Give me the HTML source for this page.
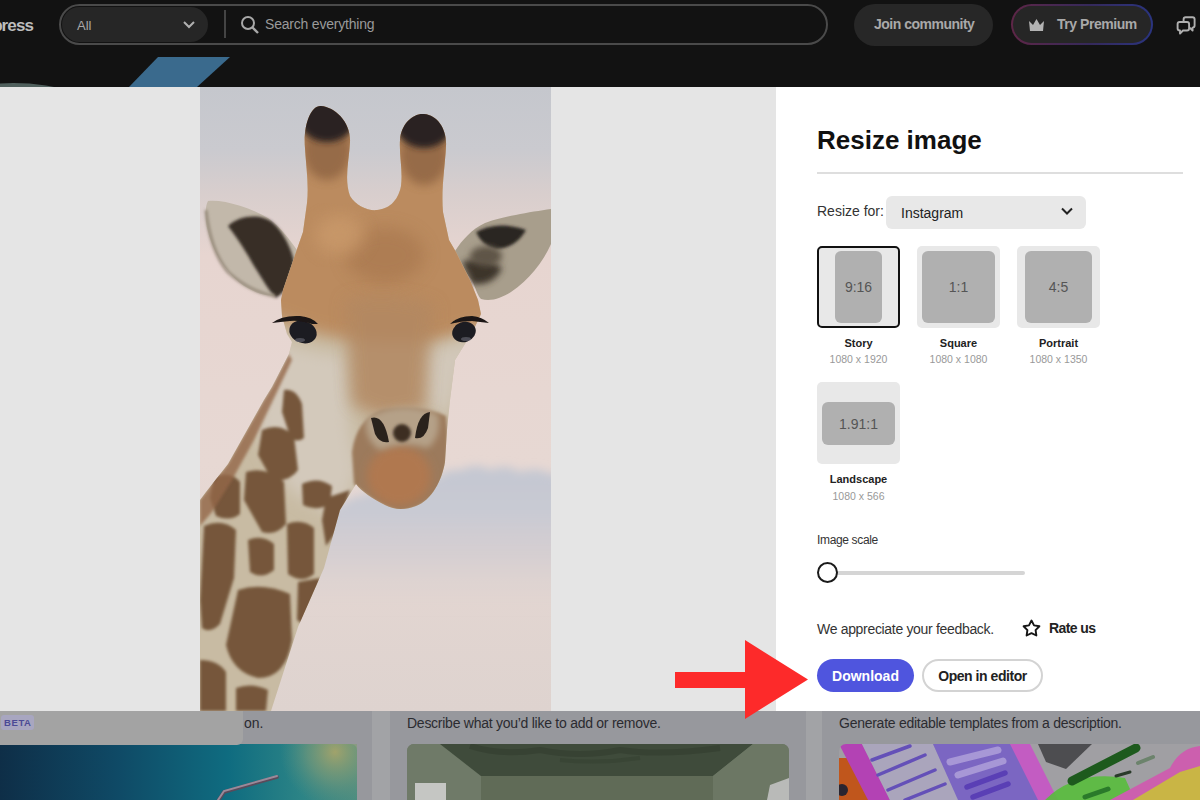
<!DOCTYPE html>
<html><head><meta charset="utf-8">
<style>
*{margin:0;padding:0;box-sizing:border-box}
html,body{width:1200px;height:800px;overflow:hidden;background:#121212;font-family:"Liberation Sans",sans-serif}
.a{position:absolute;white-space:nowrap}
</style></head>
<body>
<!-- HEADER -->
<div class="a" style="left:0;top:0;width:1200px;height:87px;background:#121212"></div>
<div class="a" style="right:1167px;top:16px;font-size:17px;letter-spacing:-0.9px;font-weight:bold;color:#bdbdbd">press</div>
<div class="a" style="left:59px;top:4px;width:769px;height:41px;border:2px solid #4a4a4a;border-radius:21px"></div>
<div class="a" style="left:62px;top:7px;width:146px;height:35px;background:#262626;border-radius:18px"></div>
<div class="a" style="left:77px;top:18px;font-size:13px;color:#a8a8a8">All</div>
<svg class="a" style="left:182px;top:20px" width="14" height="10" viewBox="0 0 14 10"><path d="M2 2 L7 7 L12 2" stroke="#b0b0b0" stroke-width="2" fill="none"/></svg>
<div class="a" style="left:224px;top:10px;width:2px;height:28px;background:#444"></div>
<svg class="a" style="left:240px;top:15px" width="20" height="19" viewBox="0 0 20 19"><circle cx="8" cy="8" r="6" stroke="#a8a8a8" stroke-width="2" fill="none"/><path d="M12.5 12.5 L18 18" stroke="#a8a8a8" stroke-width="2.4"/></svg>
<div class="a" style="left:265px;top:16px;font-size:14px;letter-spacing:-0.2px;color:#9a9a9a">Search everything</div>

<div class="a" style="left:854px;top:4px;width:139px;height:42px;background:#272727;border-radius:21px"></div>
<div class="a" style="left:874px;top:16px;font-size:14px;letter-spacing:-0.5px;font-weight:bold;color:#a9a9a9">Join community</div>

<div class="a" style="left:1011px;top:4px;width:142px;height:41px;border-radius:21px;background:linear-gradient(90deg,#5e2647,#35295a 55%,#2a3480)"></div>
<div class="a" style="left:1013px;top:6px;width:138px;height:37px;border-radius:19px;background:#262626"></div>
<svg class="a" style="left:1028px;top:18px" width="17" height="15" viewBox="0 0 17 15"><path d="M1 3 L5 7 L8.5 1 L12 7 L16 3 L15 13 L2 13 Z" fill="#b3b3b3"/></svg>
<div class="a" style="left:1057px;top:16px;font-size:14px;letter-spacing:-0.45px;font-weight:bold;color:#a9a9a9">Try Premium</div>
<svg class="a" style="left:1172px;top:12px" width="28" height="26" viewBox="1172 12 28 26"><path d="M1183.6 22 V19.3 Q1183.6 17.2 1185.7 17.2 H1192.5 Q1194.6 17.2 1194.6 19.3 V25.5 Q1194.6 27.6 1192.5 27.6 L1192.6 30.6 L1189.6 27.6" stroke="#b0b0b0" stroke-width="1.9" fill="none" stroke-linejoin="round"/><path d="M1179.6 22 H1187 Q1189.1 22 1189.1 24.1 V28.4 Q1189.1 30.5 1187 30.5 H1183 L1180 33.6 V30.5 Q1177.6 30.5 1177.6 28.4 V24.1 Q1177.6 22 1179.6 22 Z" stroke="#b0b0b0" stroke-width="1.9" fill="#121212" stroke-linejoin="round"/></svg>

<!-- blue parallelogram -->
<svg class="a" style="left:0;top:50px" width="260" height="40" viewBox="0 50 260 40"><path d="M158 57 L230 57 L197 87 L129 87 Z" fill="#3a6a8d"/><path d="M0 83.5 Q22 82 46 85.5 L54 87 L0 87Z" fill="#50605d"/></svg>

<!-- MODAL -->
<div class="a" style="left:0;top:87px;width:776px;height:624px;background:#e5e5e5"></div>
<svg class="a" style="left:200px;top:87px" width="351" height="624" viewBox="200 87 351 624">
<defs>
<linearGradient id="sky" x1="0" y1="87" x2="0" y2="711" gradientUnits="userSpaceOnUse">
<stop offset="0" stop-color="#c5c7cd"/><stop offset="0.1" stop-color="#cacacf"/><stop offset="0.17" stop-color="#d8cecd"/><stop offset="0.27" stop-color="#e7d5d0"/><stop offset="0.6" stop-color="#e7d8d3"/><stop offset="1" stop-color="#ded3cf"/>
</linearGradient>
<filter id="b8" x="-30%" y="-30%" width="160%" height="160%"><feGaussianBlur stdDeviation="8"/></filter>
<filter id="b5" x="-30%" y="-30%" width="160%" height="160%"><feGaussianBlur stdDeviation="5"/></filter>
<filter id="b3" x="-30%" y="-30%" width="160%" height="160%"><feGaussianBlur stdDeviation="3"/></filter>
<filter id="b2" x="-30%" y="-30%" width="160%" height="160%"><feGaussianBlur stdDeviation="1.8"/></filter>
<filter id="b1" x="-20%" y="-20%" width="140%" height="140%"><feGaussianBlur stdDeviation="0.7"/></filter>
<clipPath id="headclip"><path d="M200 500 L206 492 L228 464 L246 432 L264 400 L272 387 L289 354 L292 342 L287 334 L282 316 L281 300 L283 290 L296 252 L303 232 L307 203 C309 185 306 165 305 148 C303 125 311 105 321 106 C335 107 351 122 350 142 C349 160 344 180 350 196 C356 206 368 211 377 210 C388 209 398 202 401 186 C403 170 399 155 400 140 C401 124 413 113 424 114 C438 115 447 130 446 146 C445 166 441 190 443 212 L449 240 L456 252 L470 280 L478 300 L481 314 L473 331 L455 360 L450 400 L447 430 L445 462 C442 480 432 500 416 506 C405 510 395 510 385 505 C372 498 362 492 356 484 L340 510 L324 568 L298 627 L271 711 L200 711 Z"/></clipPath>
</defs>
<rect x="200" y="87" width="351" height="624" fill="url(#sky)"/>
<!-- cloud band -->
<defs><linearGradient id="cl" x1="0" y1="462" x2="0" y2="610" gradientUnits="userSpaceOnUse"><stop offset="0" stop-color="#c3c7d2"/><stop offset="0.35" stop-color="#c9cad3"/><stop offset="0.65" stop-color="#d3cdd1" stop-opacity="0.8"/><stop offset="1" stop-color="#ddd3d0" stop-opacity="0"/></linearGradient></defs>
<path d="M260 525 L340 505 Q352 496 368 494 Q385 486 405 484 Q420 478 436 478 Q448 468 462 470 Q476 462 490 470 Q505 463 520 472 Q536 466 551 474 L570 474 L570 610 L260 610 Z" fill="url(#cl)" filter="url(#b5)"/>
<path d="M200 560 Q240 550 280 560 L270 600 L200 600 Z" fill="#d3d0d6" filter="url(#b8)" opacity="0.5"/>
<!-- ears -->
<g filter="url(#b1)">
<path d="M208 201 C222 199 250 207 268 218 C282 228 292 243 297 250 L290 275 L279 295 C268 298 252 292 240 283 C224 270 212 250 207 228 C205 218 205 206 208 201 Z" fill="#c2b8aa"/>
<path d="M228 226 C240 214 262 214 272 222 C284 232 292 250 294 262 L286 290 L276 298 C268 290 262 278 254 266 C246 252 240 242 228 226 Z" fill="#382e26" filter="url(#b2)"/>
<path d="M206 210 Q210 250 228 272 Q250 292 275 296" stroke="#978b7b" stroke-width="3" fill="none" filter="url(#b2)"/>
<path d="M551 209 C530 212 500 217 485 223 C472 229 462 240 455 251 C456 262 466 272 472 280 C476 290 478 296 481 299 C491 302 501 298 511 292 C529 280 543 262 551 244 Z" fill="#a89e8c"/>
<path d="M476 232 Q498 220 526 230 Q516 248 496 249 Q482 246 476 232 Z" fill="#2b2520" filter="url(#b2)"/>
<path d="M462 262 Q484 254 502 268 Q494 286 472 284 Z" fill="#3e342b" filter="url(#b3)"/>
<ellipse cx="486" cy="256" rx="16" ry="10" fill="#5e5446" filter="url(#b3)"/>
</g>
<!-- head + neck -->
<g clip-path="url(#headclip)">
<rect x="200" y="87" width="351" height="624" fill="#c8bba3"/>
<!-- upper head tan -->
<path d="M240 60 L520 60 L520 315 Q470 330 440 340 Q400 345 360 340 Q320 338 280 320 L240 315 Z" fill="#bb8b5e" filter="url(#b8)"/>
<!-- ossicone tips -->
<ellipse cx="327" cy="150" rx="24" ry="30" fill="#8a6040" filter="url(#b5)" opacity="0.75"/>
<ellipse cx="424" cy="155" rx="24" ry="30" fill="#8a6040" filter="url(#b5)" opacity="0.75"/>
<ellipse cx="327" cy="115" rx="30" ry="27" fill="#2a2320" filter="url(#b3)"/>
<ellipse cx="424" cy="121" rx="30" ry="27" fill="#2a2320" filter="url(#b3)"/>
<!-- forehead darker -->
<ellipse cx="385" cy="255" rx="40" ry="28" fill="#a97850" filter="url(#b8)" opacity="0.7"/>
<ellipse cx="340" cy="235" rx="25" ry="20" fill="#cf9f70" filter="url(#b8)" opacity="0.6"/>
<!-- pale lower face -->
<path d="M270 338 Q300 350 345 356 L350 430 L358 470 L340 520 L290 490 L255 430 Z" fill="#d3c9bb" filter="url(#b8)"/>
<path d="M425 350 Q455 345 485 336 L462 370 L452 405 L438 420 L425 395 Z" fill="#d2c8ba" filter="url(#b8)"/>
<!-- nose bridge -->
<path d="M345 300 Q390 290 435 305 L428 360 L425 410 L385 418 L352 405 Z" fill="#b28862" filter="url(#b8)" opacity="0.85"/>
<!-- muzzle -->
<path d="M352 452 Q356 420 382 410 Q420 404 446 416 Q450 450 444 482 Q428 508 399 511 Q372 502 354 484 Z" fill="#9c7a5c" filter="url(#b2)"/>
<ellipse cx="399" cy="476" rx="32" ry="30" fill="#b07850" filter="url(#b5)"/>
<path d="M366 418 Q400 398 438 414 Q442 436 428 448 Q404 440 380 450 Q364 440 366 418 Z" fill="#b5a188" filter="url(#b3)"/>
<path d="M371 418 Q384 414 389 442 Q380 444 375 434 Z" fill="#2a221d" filter="url(#b1)"/>
<path d="M430 412 Q418 413 415 438 Q424 440 428 428 Z" fill="#2a221d" filter="url(#b1)"/>
<ellipse cx="402" cy="433" rx="9" ry="9" fill="#3e2e24" filter="url(#b2)"/>
<!-- mane edge -->

<!-- neck spots -->
<g fill="#76573a" filter="url(#b2)">
<path d="M284 390 Q296 388 302 404 L304 438 Q296 444 290 436 L282 412 Z"/>
<path d="M262 430 Q280 422 294 436 L298 470 Q290 482 272 480 L258 455 Z"/>
<path d="M246 472 Q266 466 284 482 L286 524 Q276 536 262 532 L244 500 Z"/>
<path d="M214 478 Q230 470 240 482 L240 514 Q230 522 216 516 L210 498 Z"/>
<path d="M302 484 Q318 476 332 486 L330 504 Q316 512 303 505 Z"/>
<path d="M326 498 L350 490 L338 530 L326 546 L322 520 Z"/>
<path d="M287 524 Q302 518 314 528 L314 574 Q302 584 288 574 Z"/>
<path d="M248 540 Q262 534 274 544 L274 570 Q262 580 250 572 Z"/>
<path d="M204 526 Q222 518 236 530 L234 578 L220 624 Q210 634 202 628 L200 600 Z"/>
<path d="M238 590 Q262 582 290 594 L292 640 Q286 678 258 678 Q232 672 226 645 Z"/>
<path d="M298 582 L320 578 L318 606 L306 626 L297 620 Z"/>
<path d="M200 660 Q218 660 226 672 L226 711 L200 711 Z"/>
<path d="M236 688 Q252 682 268 690 L266 711 L236 711 Z"/>
</g>
<path d="M200 500 L206 492 L228 464 L246 432 L264 400 L272 387 L289 354 L292 360 L276 394 L254 440 L232 480 L212 512 L200 526 Z" fill="#94684a" filter="url(#b2)" opacity="0.8"/>
</g>
<!-- eyes -->
<g filter="url(#b1)">
<ellipse cx="303" cy="332" rx="14" ry="11" fill="#1d1b20" transform="rotate(20 303 332)"/>
<path d="M272 323 Q282 315 300 316 Q312 317 318 324 L312 324 Q300 320 290 321 Q280 322 272 323 Z" fill="#1a1614"/>
<ellipse cx="464" cy="332" rx="12" ry="10" fill="#1d1b20" transform="rotate(-20 464 332)"/>
<path d="M450 324 Q458 316 472 316 Q482 317 489 323 Q480 322 472 321 Q460 321 450 324 Z" fill="#1a1614"/>
<ellipse cx="300" cy="340" rx="5" ry="2" fill="#6a6e78" opacity="0.6"/>
<ellipse cx="466" cy="339" rx="5" ry="2" fill="#6a6e78" opacity="0.6"/>
</g>
</svg>
<div class="a" style="left:776px;top:87px;width:424px;height:624px;background:#fff"></div>


<!-- PANEL -->
<div class="a" style="left:817px;top:125px;font-size:26px;font-weight:bold;color:#111">Resize image</div>
<div class="a" style="left:817px;top:172px;width:366px;height:2px;background:#dedede"></div>
<div class="a" style="left:817px;top:203px;font-size:14px;color:#333">Resize for:</div>
<div class="a" style="left:886px;top:196px;width:200px;height:33px;background:#e8e8e8;border-radius:6px"></div>
<div class="a" style="left:901px;top:205px;font-size:14px;color:#222">Instagram</div>
<svg class="a" style="left:1060px;top:206px" width="14" height="10" viewBox="0 0 14 10"><path d="M2 2.5 L7 7.5 L12 2.5" stroke="#222" stroke-width="2" fill="none"/></svg>

<div class="a" style="left:817px;top:246px;width:83px;height:82px;background:#e8e8e8;border:2px solid #111;border-radius:5px"></div>
<div class="a" style="left:835px;top:251px;width:47px;height:72px;background:#b0b0b0;border-radius:6px"></div>
<div class="a" style="left:835px;top:279px;width:47px;text-align:center;font-size:14px;color:#555">9:16</div>
<div class="a" style="left:817px;top:337px;width:83px;text-align:center;font-size:11px;font-weight:bold;color:#222">Story</div>
<div class="a" style="left:817px;top:353px;width:83px;text-align:center;font-size:10.5px;color:#999">1080 x 1920</div>

<div class="a" style="left:917px;top:246px;width:83px;height:82px;background:#e8e8e8;border-radius:5px"></div>
<div class="a" style="left:922px;top:251px;width:73px;height:72px;background:#b0b0b0;border-radius:6px"></div>
<div class="a" style="left:922px;top:279px;width:73px;text-align:center;font-size:14px;color:#555">1:1</div>
<div class="a" style="left:917px;top:337px;width:83px;text-align:center;font-size:11px;font-weight:bold;color:#222">Square</div>
<div class="a" style="left:917px;top:353px;width:83px;text-align:center;font-size:10.5px;color:#999">1080 x 1080</div>

<div class="a" style="left:1017px;top:246px;width:83px;height:82px;background:#e8e8e8;border-radius:5px"></div>
<div class="a" style="left:1025px;top:251px;width:67px;height:72px;background:#b0b0b0;border-radius:6px"></div>
<div class="a" style="left:1025px;top:279px;width:67px;text-align:center;font-size:14px;color:#555">4:5</div>
<div class="a" style="left:1017px;top:337px;width:83px;text-align:center;font-size:11px;font-weight:bold;color:#222">Portrait</div>
<div class="a" style="left:1017px;top:353px;width:83px;text-align:center;font-size:10.5px;color:#999">1080 x 1350</div>

<div class="a" style="left:817px;top:382px;width:83px;height:82px;background:#e8e8e8;border-radius:5px"></div>
<div class="a" style="left:822px;top:402px;width:73px;height:43px;background:#b0b0b0;border-radius:6px"></div>
<div class="a" style="left:822px;top:416px;width:73px;text-align:center;font-size:14px;color:#555">1.91:1</div>
<div class="a" style="left:817px;top:473px;width:83px;text-align:center;font-size:11px;font-weight:bold;color:#222">Landscape</div>
<div class="a" style="left:817px;top:490px;width:83px;text-align:center;font-size:10.5px;color:#999">1080 x 566</div>

<div class="a" style="left:817px;top:533px;font-size:12px;letter-spacing:-0.35px;color:#333">Image scale</div>
<div class="a" style="left:830px;top:571px;width:195px;height:4px;background:#d5d5d5;border-radius:2px"></div>
<div class="a" style="left:817px;top:562px;width:21px;height:21px;border:2px solid #1a1a1a;border-radius:50%;background:#fff"></div>

<div class="a" style="left:817px;top:621px;font-size:14px;letter-spacing:-0.32px;color:#333">We appreciate your feedback.</div>
<svg class="a" style="left:1022px;top:619px" width="19" height="18" viewBox="0 0 19 18"><path d="M9.50 1.50 L12.03 6.32 L17.39 7.24 L13.59 11.13 L14.38 16.51 L9.50 14.10 L4.62 16.51 L5.41 11.13 L1.61 7.24 L6.97 6.32 Z" stroke="#151515" stroke-width="1.9" fill="none" stroke-linejoin="round"/></svg>
<div class="a" style="left:1049px;top:620px;font-size:14px;letter-spacing:-0.6px;font-weight:bold;color:#222">Rate us</div>

<div class="a" style="left:817px;top:659px;width:97px;height:33px;background:#4f55de;border-radius:17px"></div>
<div class="a" style="left:817px;top:668px;width:97px;text-align:center;font-size:14px;font-weight:bold;color:#fff">Download</div>
<div class="a" style="left:922px;top:659px;width:121px;height:33px;border:2px solid #d3d3d3;border-radius:17px;background:#fff"></div>
<div class="a" style="left:922px;top:668px;width:121px;text-align:center;font-size:14px;letter-spacing:-0.45px;font-weight:bold;color:#222">Open in editor</div>



<!-- BOTTOM -->
<div class="a" style="left:0;top:711px;width:1200px;height:89px;background:#a2a3a6"></div>
<div class="a" style="left:-20px;top:711px;width:392px;height:100px;background:#97989d"></div>
<div class="a" style="left:390px;top:711px;width:416px;height:100px;background:#97989d"></div>
<div class="a" style="left:822px;top:711px;width:400px;height:100px;background:#97989d"></div>
<!-- card1 image -->
<svg class="a" style="left:0;top:744px" width="357" height="56" viewBox="0 744 357 56">
<defs>
<linearGradient id="teal" x1="0" y1="0" x2="1" y2="0"><stop offset="0" stop-color="#0e2c45"/><stop offset="0.35" stop-color="#0f4a66"/><stop offset="0.65" stop-color="#0f6c80"/><stop offset="0.85" stop-color="#2c8486"/><stop offset="1" stop-color="#4d8d80"/></linearGradient>
<radialGradient id="yel" cx="335" cy="752" r="55" gradientUnits="userSpaceOnUse"><stop offset="0" stop-color="#a6a46a" stop-opacity="0.95"/><stop offset="0.5" stop-color="#7c9a78" stop-opacity="0.6"/><stop offset="1" stop-color="#5a9080" stop-opacity="0"/></radialGradient>
</defs>
<rect x="-10" y="744" width="367" height="66" rx="6" fill="url(#teal)"/>
<rect x="240" y="744" width="117" height="56" fill="url(#yel)"/>
<path d="M218 801 L224 792 L277 777" stroke="#5a4a5a" stroke-width="3.5" fill="none" stroke-linecap="round"/><path d="M218 800 L224 791 L277 776" stroke="#9a8a9a" stroke-width="2" fill="none" stroke-linecap="round"/>
</svg>
<div class="a" style="left:0;top:711px;width:243px;height:34px;background:#a3a3a3;border-radius:0 0 6px 0"></div>
<div class="a" style="left:1px;top:715px;width:33px;height:15px;background:#a8a6c0;border-radius:3px"></div>
<div class="a" style="left:4px;top:717px;font-size:9.5px;font-weight:bold;letter-spacing:0.6px;color:#4b4a95">BETA</div>
<div class="a" style="left:244px;top:715px;font-size:14px;color:#2b2b30">on.</div>
<div class="a" style="left:407px;top:715px;font-size:14px;letter-spacing:-0.26px;color:#2b2b30">Describe what you’d like to add or remove.</div>
<div class="a" style="left:839px;top:715px;font-size:14px;letter-spacing:-0.26px;color:#2b2b30">Generate editable templates from a description.</div>
<!-- card2 image -->
<svg class="a" style="left:407px;top:744px" width="382" height="56" viewBox="407 744 382 56">
<clipPath id="c2"><rect x="407" y="744" width="382" height="70" rx="7"/></clipPath>
<g clip-path="url(#c2)">
<rect x="407" y="744" width="382" height="56" fill="#6a7563"/>
<path d="M407 744 L440 744 L481 776 L481 800 L407 800 Z" fill="#6f7a68"/>
<path d="M440 744 L753 744 L713 776 L481 776 Z" fill="#3f4b3b"/>
<rect x="481" y="776" width="232" height="24" fill="#606b57"/>
<path d="M713 776 L753 744 L789 744 L789 800 L713 800 Z" fill="#6c7764"/>
<rect x="415" y="783" width="31" height="20" fill="#c5c6c3"/>
<path d="M770 785 L789 778 L789 800 L767 800 Z" fill="#b9bab8"/>
<path d="M470 746 Q500 756 540 750 Q580 758 620 750 Q660 756 720 748" stroke="#2f3a2c" stroke-width="6" fill="none" opacity="0.5"/><path d="M560 760 Q600 764 640 758" stroke="#344030" stroke-width="4" fill="none" opacity="0.5"/>
</g>
</svg>
<!-- card3 image -->
<svg class="a" style="left:839px;top:744px" width="361" height="56" viewBox="839 744 361 56">
<clipPath id="c3"><rect x="839" y="744" width="400" height="70" rx="7"/></clipPath>
<g clip-path="url(#c3)">
<rect x="839" y="744" width="361" height="56" fill="#a09fa3"/>
<path d="M839 758 L852 758 L872 800 L839 800 Z" fill="#c0561c"/>
<circle cx="842" cy="790" r="6" fill="#2a2530"/>
<path d="M839 744 L862 744 L890 800 L868 800 L839 744 Z" fill="#b342b4"/>
<path d="M862 744 L933 744 L960 800 L890 800 Z" fill="#aaa5bc"/>
<path d="M872 760 L910 746 M878 775 L925 755 M888 790 L935 770 M905 800 L945 784" stroke="#6450b8" stroke-width="3.5" stroke-linecap="round"/>
<path d="M933 744 L1013 744 L1040 800 L958 800 Z" fill="#7b66c2"/>
<path d="M1010 744 L1030 744 L1058 800 L1038 800 Z" fill="#c35cc2"/>
<path d="M950 762 L998 750 M958 775 L1003 761" stroke="#a797d6" stroke-width="7" stroke-linecap="round"/>
<path d="M967 787 L1005 773 M973 797 L1008 784" stroke="#5a3fb5" stroke-width="5.5" stroke-linecap="round"/>
<path d="M1038 744 L1092 744 L1066 769 L1046 762 Z" fill="#4d4d50"/>
<path d="M1045 800 Q1075 770 1125 778 L1135 800 Z" fill="#58bd3c" opacity="0.9"/>
<path d="M1072 781 L1136 748" stroke="#1d5a1d" stroke-width="9" stroke-linecap="round"/>
<path d="M1085 797 L1108 789" stroke="#2a7a2a" stroke-width="5" stroke-linecap="round"/>
<path d="M1116 776 L1130 772" stroke="#2a3a2a" stroke-width="3" stroke-linecap="round"/>
<path d="M1138 763 L1153 757" stroke="#6c836c" stroke-width="4" stroke-linecap="round"/>
<path d="M1110 800 L1170 768 Q1180 748 1200 746 L1200 800 Z" fill="#cc5fae"/>
<path d="M1133 800 L1180 772 L1200 766 L1200 800 Z" fill="#c9b545"/>
</g>
</svg>
<!-- red arrow -->
<svg class="a" style="left:670px;top:636px" width="145" height="88" viewBox="670 636 145 88"><path d="M675 672 L745 672 L745 640 L808 679.5 L745 719 L745 688 L675 688 Z" fill="#fd2a2a"/></svg>
</body></html>
